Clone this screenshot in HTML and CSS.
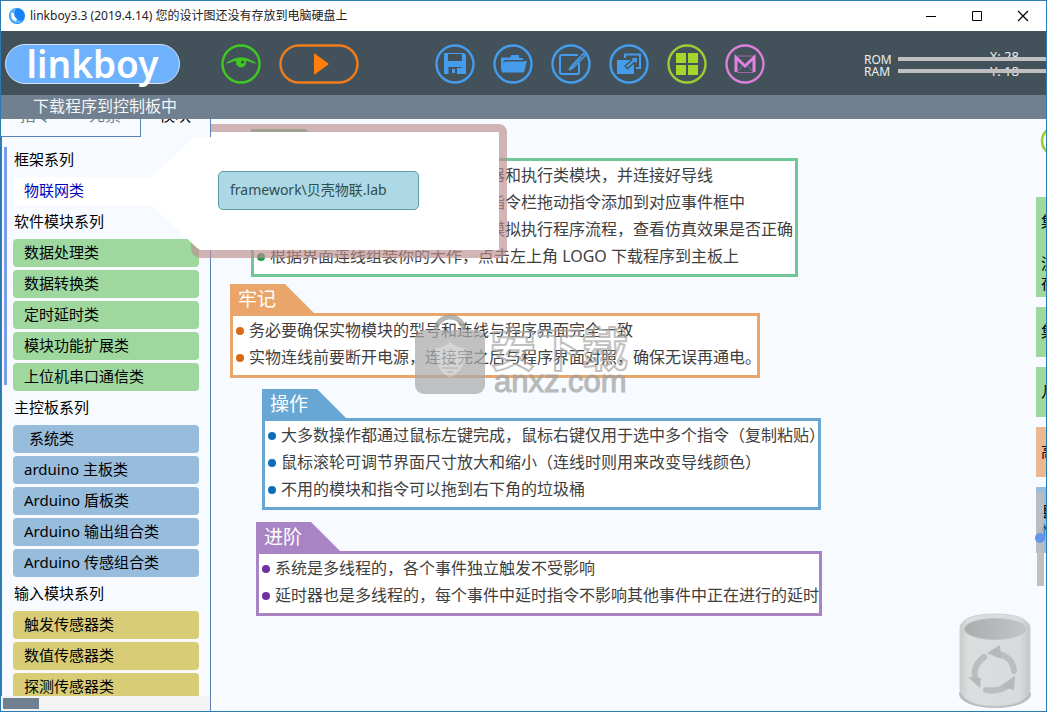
FILE: index.html
```html
<!DOCTYPE html>
<html lang="zh-CN">
<head>
<meta charset="utf-8">
<title>linkboy3.3</title>
<link rel="stylesheet" href="styles.css">
</head>
<body>
<div class="window">
  <header class="titlebar">
    <svg class="app-icon" width="18" height="18" viewBox="0 0 18 18"><circle cx="9" cy="9" r="8" fill="#1585f5"/><path d="M2 5A8 8 0 0 1 9 1Q6 4 6 8Q8 14 15 14Q10 18 5 15Q0 11 2 5Z" fill="#5cb4ff"/><path d="M3 6h3l.5 3.500L9 12l-1.500 2.500L4 12z" fill="#fff"/></svg>
    <span class="app-title">linkboy3.3 (2019.4.14) 您的设计图还没有存放到电脑硬盘上</span>
    <div class="win-buttons">
      <button class="win-btn" aria-label="最小化"><svg width="12" height="12" viewBox="0 0 12 12"><path d="M1 6.500h10" stroke="#000"/></svg></button>
      <button class="win-btn" aria-label="最大化"><svg width="12" height="12" viewBox="0 0 12 12"><path d="M1.500 1.500h9v9h-9z" fill="none" stroke="#000"/></svg></button>
      <button class="win-btn" aria-label="关闭"><svg width="12" height="12" viewBox="0 0 12 12"><path d="M1 1l10 10M11 1L1 11" stroke="#000" stroke-width="1.200"/></svg></button>
    </div>
  </header>

  <div class="toolbar">
    <button class="logo">linkboy</button>
    <div class="run-tools">
      <button class="tool" aria-label="查看"><svg width="40" height="40" viewBox="0 0 40 40"><circle cx="20" cy="20" r="18.500" fill="none" stroke="#3fc822" stroke-width="2.400"/><path d="M6 19Q20 9 34 19Q20 13 6 19Z" fill="#3fc822" stroke="#3fc822" stroke-width="1.200" stroke-linejoin="round"/><circle cx="20" cy="18.500" r="5" fill="#3fc822"/><circle cx="21.500" cy="18" r="1.600" fill="#43525a"/></svg></button>
      <button class="tool" aria-label="运行"><svg width="80" height="40" viewBox="0 0 80 40"><rect x="1.500" y="1.500" width="77" height="37" rx="18.500" fill="none" stroke="#ee7c1c" stroke-width="2.400"/><path d="M35 9v22l15-11z" fill="#ff7f0a"/></svg></button>
    </div>
    <div class="file-tools">
      <button class="tool" aria-label="保存"><svg width="40" height="40" viewBox="0 0 40 40"><circle cx="20" cy="20" r="18.500" fill="none" stroke="#459ceb" stroke-width="2.400"/><path d="M9 9h20l2 2v19H9z" fill="#459ceb"/><path d="M13 10h14v7H13zM13.500 23h13v7h-13z" fill="#43525a"/><path d="M17 25h3v4h-3zM22 24h5v6h-5z" fill="#459ceb"/></svg></button>
      <button class="tool" aria-label="打开"><svg width="40" height="40" viewBox="0 0 40 40"><circle cx="20" cy="20" r="18.500" fill="none" stroke="#459ceb" stroke-width="2.400"/><path d="M8 28V13.500h9l1.500-2.500H26v3h4v2H11.500z" fill="#459ceb"/><path d="M9 28.500V17h25l-3 11.500z" fill="#459ceb"/><path d="M10 18.500l3-1.500h18" fill="none" stroke="#43525a" stroke-width="1"/></svg></button>
      <button class="tool" aria-label="编辑"><svg width="40" height="40" viewBox="0 0 40 40"><circle cx="20" cy="20" r="18.500" fill="none" stroke="#459ceb" stroke-width="2.400"/><path d="M27 11H11q-2 0-2 2v15q0 2 2 2h15q2 0 2-2v-9" fill="none" stroke="#459ceb" stroke-width="2"/><path d="M32.500 9.500L21 21.500l-3 4.500 4.500-2.500L34 12z" fill="#43525a" stroke="#459ceb" stroke-width="1.500"/><path d="M30.500 13L20 24.500" stroke="#459ceb"/></svg></button>
      <button class="tool" aria-label="导出"><svg width="40" height="40" viewBox="0 0 40 40"><circle cx="20" cy="20" r="18.500" fill="none" stroke="#459ceb" stroke-width="2.400"/><path d="M8 16h17v14H8z" fill="#459ceb"/><path d="M16 14v-3.500h15V24h-4" fill="none" stroke="#459ceb" stroke-width="2"/><path d="M16 22l7-6-2-2.500 8-.5-1 8-2.500-2.500-7 6z" fill="#459ceb" stroke="#43525a" stroke-width="1.300"/></svg></button>
      <button class="tool" aria-label="模块"><svg width="40" height="40" viewBox="0 0 40 40"><circle cx="20" cy="20" r="18.500" fill="none" stroke="#9ccd32" stroke-width="2.400"/><path d="M9 9h10v10H9zM21 9h10v10H21zM9 21h10v10H9zM21 21h10v10H21z" fill="#a4d62c"/></svg></button>
      <button class="tool" aria-label="邮件"><svg width="40" height="40" viewBox="0 0 40 40"><circle cx="20" cy="20" r="18.500" fill="none" stroke="#dc80dc" stroke-width="2.400"/><path d="M11 28V13.500l9 8.500 9-8.500V28" fill="none" stroke="#e283e2" stroke-width="3"/><path d="M12 12h16M12 28.500h17M13 27l5-6M27 27l-5-6" stroke="#b06fb5" stroke-width=".8"/></svg></button>
    </div>
    <dl class="memory">
      <dt>ROM</dt><dd><span class="coord">X: 28</span><i class="meter"></i></dd>
      <dt>RAM</dt><dd><span class="coord">Y: 18</span><i class="meter"></i></dd>
    </dl>
  </div>

  <div class="status">下载程序到控制板中</div>

  <main class="workspace">
    <aside class="sidebar">
      <nav class="tabs">
        <button class="tab">指令</button><button class="tab tab-mid">元素</button><button class="tab tab-active">模块</button>
      </nav>
      <div class="modules">
        <div class="section-mark"></div>
        <div class="module-list">
          <h3 class="group">框架系列</h3>
          <button class="item selected">物联网类</button>
          <h3 class="group">软件模块系列</h3>
          <button class="item green">数据处理类</button>
          <button class="item green">数据转换类</button>
          <button class="item green">定时延时类</button>
          <button class="item green">模块功能扩展类</button>
          <button class="item green">上位机串口通信类</button>
          <h3 class="group">主控板系列</h3>
          <button class="item blue indent">系统类</button>
          <button class="item blue">arduino 主板类</button>
          <button class="item blue">Arduino 盾板类</button>
          <button class="item blue">Arduino 输出组合类</button>
          <button class="item blue">Arduino 传感组合类</button>
          <h3 class="group">输入模块系列</h3>
          <button class="item yellow">触发传感器类</button>
          <button class="item yellow">数值传感器类</button>
          <button class="item yellow">探测传感器类</button>
        </div>
      </div>
      <div class="hscroll"><div class="thumb"></div></div>
    </aside>

    <section class="canvas">
      <article class="note note-green">
        <h2 class="note-title"></h2>
        <ul class="note-body">
          <li class="tucked">器和执行类模块，并连接好导线</li>
          <li class="tucked">指令栏拖动指令添加到对应事件框中</li>
          <li class="tucked">模拟执行程序流程，查看仿真效果是否正确</li>
          <li>根据界面连线组装你的大作，点击左上角 LOGO 下载程序到主板上</li>
        </ul>
      </article>
      <article class="note note-orange">
        <h2 class="note-title">牢记</h2>
        <ul class="note-body">
          <li>务必要确保实物模块的型号和连线与程序界面完全一致</li>
          <li>实物连线前要断开电源，连接完之后与程序界面对照，确保无误再通电。</li>
        </ul>
      </article>
      <article class="note note-blue">
        <h2 class="note-title">操作</h2>
        <ul class="note-body">
          <li>大多数操作都通过鼠标左键完成，鼠标右键仅用于选中多个指令（复制粘贴）</li>
          <li>鼠标滚轮可调节界面尺寸放大和缩小（连线时则用来改变导线颜色）</li>
          <li>不用的模块和指令可以拖到右下角的垃圾桶</li>
        </ul>
      </article>
      <article class="note note-purple">
        <h2 class="note-title">进阶</h2>
        <ul class="note-body">
          <li>系统是多线程的，各个事件独立触发不受影响</li>
          <li>延时器也是多线程的，每个事件中延时指令不影响其他事件中正在进行的延时</li>
        </ul>
      </article>

      <div class="watermark">
        <svg width="72" height="80" viewBox="0 0 72 80"><path d="M22 24v-7a14 14 0 0 1 28 0v7" fill="none" stroke="#999" stroke-width="5"/><rect x="1" y="16" width="70" height="64" rx="9" fill="#aaa"/><path d="M36 28Q44 35 52 34Q53 55 36 64Q20 55 21 34Q29 35 36 28Z" fill="#c6c6c6"/><path d="M30 49h12M28 54h16M33 58h6" stroke="#aaa" stroke-width="2"/></svg>
        <div class="mark-text"><span class="mark-cn">安下载</span><span class="mark-url">anxz.com</span></div>
      </div>

      <div class="palette">
        <svg class="ring" width="10" height="32" viewBox="0 0 10 32"><circle cx="20" cy="16" r="14" fill="none" stroke="#9ccd32" stroke-width="2.500"/></svg>
        <div class="block tall"><span>集</span><span class="low">流</span><span>存</span></div>
        <div class="block"><span>集</span></div>
        <div class="block"><span>几</span></div>
        <div class="block peach"><span>高</span></div>
        <div class="block sky"><span>县</span><span>情</span></div>
        <svg class="slider" width="11" height="96" viewBox="0 0 11 96"><path d="M1 0h8v61H1z" fill="#bdbdbd" opacity=".85"/><path d="M2 61h7v33H2z" fill="#c0c0c0"/><circle cx="5" cy="46" r="5" fill="#6495ed"/></svg>
      </div>

      <svg class="bin" width="80" height="98" viewBox="0 0 80 98">
        <defs><linearGradient id="bin-body"><stop offset="0" stop-color="#c9cbcc"/><stop offset=".12" stop-color="#dcdddf"/><stop offset=".85" stop-color="#d9dadb"/><stop offset="1" stop-color="#c4c6c7"/></linearGradient><linearGradient id="bin-hole"><stop offset="0" stop-color="#aaadae"/><stop offset="1" stop-color="#c2c5c5"/></linearGradient></defs>
        <ellipse cx="40" cy="82" rx="36" ry="14" fill="#b9bbbd"/>
        <path d="M5 14Q10 2 40 2T75 14V78Q70 94 40 94T5 78Z" fill="url(#bin-body)" stroke="#cfd1d2"/>
        <ellipse cx="40" cy="17" rx="30.500" ry="10.500" fill="url(#bin-hole)" stroke="#bfc1c2"/>
        <g fill="none" stroke="#bbbdbf" stroke-width="6" stroke-linecap="round"><path d="M43 42Q58 45 59 59"/><path d="M31 78Q44 80 52 74"/><path d="M29 45Q18 53 20 65"/></g>
        <g fill="#b6b8ba"><path d="M32 41l13-8 1 14z"/><path d="M60 64l-1 14-14-4z"/><path d="M13 65l13 1-1 10z"/></g>
      </svg>
    </section>

    <div class="popup">
      <svg class="popup-shape" width="520" height="150" viewBox="1 119 520 150">
        <path fill="#bc8f8f" fill-opacity=".66" d="M211 124H499a8 8 0 0 1 8 8V250a8 8 0 0 1-8 8H200a9 9 0 0 1-9-9V241L200 250H499V132H211Z"/>
        <path fill="#fff" d="M14 177H152L193 139Q195 137 200 137H211V132H496a3 3 0 0 1 3 3V250H202Q199 250 196 247L152 205H14Z"/>
      </svg>
      <button class="lab">framework\贝壳物联.lab</button>
    </div>
  </main>
</div>
</body>
</html>
```
FILE: styles.css
```css
* { box-sizing: border-box; }

body {
  margin: 0;
  font-family: "Noto Sans", "Noto Sans CJK SC", sans-serif;
  color: #000;
}

button {
  margin: 0;
  padding: 0;
  border: 0;
  background: none;
  font: inherit;
  color: inherit;
  text-align: left;
}

svg { display: block; }
h2, h3, ul, dl, dd { margin: 0; padding: 0; font-weight: 400; }

.window {
  display: flex;
  flex-direction: column;
  height: 100vh;
  border: 1px solid #2b7bb5;
  overflow: hidden;
  background: #f7fbff;
}

.titlebar {
  display: flex;
  align-items: center;
  height: 30px;
  flex: none;
  padding-left: 7px;
  background: #fff;
}
.app-title { margin-left: 4px; font-size: 12px; line-height: 18px; color: #222; }
.win-buttons { display: flex; margin-left: auto; }
.win-btn { display: grid; place-items: center; width: 46px; height: 30px; }

.toolbar {
  display: flex;
  align-items: center;
  height: 64px;
  flex: none;
  padding: 1px 0 0 4px;
  background: #43525a;
}
.logo {
  width: 175px;
  height: 40px;
  border: 1px solid #cfe4fb;
  border-radius: 20px;
  background: #6eb2fd;
  color: #fff;
  font-size: 37px;
  font-weight: 600;
  line-height: 32px;
  text-align: center;
}
.run-tools { display: flex; gap: 18px; margin-left: 41px; }
.file-tools { display: flex; gap: 18px; margin-left: 76px; }

.memory {
  display: grid;
  grid-template-columns: 34px 1fr;
  grid-auto-rows: 12px;
  flex: 1;
  margin-left: 99px;
  padding-top: 4px;
  font-size: 12px;
  line-height: 12px;
  color: #eee;
}
.memory dd { position: relative; }
.meter { position: absolute; left: 0; right: 0; top: 3px; height: 4px; background: #c0c0c0; }
.coord { position: absolute; right: 27px; top: -4px; font-size: 13px; }
.memory dd:last-child .coord { top: -1px; }

.status {
  flex: none;
  height: 24px;
  padding-left: 32px;
  background: #708090;
  color: #f4f6f8;
  font-size: 16px;
  line-height: 23px;
}

.workspace { position: relative; display: flex; flex: 1; min-height: 0; }

.sidebar {
  display: flex;
  flex-direction: column;
  width: 210px;
  flex: none;
  border-right: 1px solid #5b82b8;
}
.tabs { display: flex; align-items: flex-end; height: 18px; flex: none; overflow: hidden; }
.tab {
  width: 70px;
  height: 34px;
  padding-bottom: 10px;
  border-bottom: 1px solid #5b82b8;
  color: #708090;
  font-size: 16px;
  line-height: 20px;
  text-align: center;
}
.tab-mid { width: 71px; border-right: 1px solid #5b82b8; }
.tab-active { border-color: transparent; color: #000; }

.modules { display: flex; flex: 1; min-height: 0; overflow: hidden; border-left: 1px solid #3477cc; }
.section-mark { width: 3px; height: 238px; margin: 10px 6px 0 2px; background: #7b9ce6; }
.module-list { display: flex; flex-direction: column; gap: 3px; flex: 1; padding: 9px 11px 0 0; }
.group, .item { flex: none; height: 28px; padding-bottom: 2px; font-size: 15px; line-height: 26px; }
.group { padding-left: 1px; }
.item { padding-left: 11px; border-radius: 4px; }
.selected { position: relative; z-index: 2; color: #0000b8; }
.green { background: #9fd89f; }
.blue { background: #98bcdc; }
.yellow { background: #d8cd76; }
.indent { padding-left: 16px; }

.hscroll { flex: none; height: 15px; padding: 2px; background: #f3f3f3; }
.thumb { width: 36px; height: 11px; background: #708090; }

.canvas { position: relative; flex: 1; min-width: 0; overflow: hidden; padding-top: 10px; }

.note { white-space: nowrap; }
.note-title {
  width: 84px;
  height: 29px;
  padding-left: 8px;
  background: var(--edge);
  color: #fff;
  font-size: 19px;
  line-height: 30px;
  clip-path: polygon(0 0, 55px 0, 84px 100%, 0 100%);
}
.note-body {
  list-style: none;
  padding: 1px 0 4px 3px;
  border: 3px solid var(--edge);
  background: #fff;
  color: #404040;
  font-size: 16px;
  line-height: 27px;
}
.note-body li { display: flex; align-items: center; gap: 5px; }
.note-body li::before {
  content: "";
  width: 8px;
  height: 8px;
  flex: none;
  border-radius: 4px;
  background: var(--dot);
}
.note-body .tucked { gap: 224px; }

.note-green { --edge: #70c796; --dot: #1f9a50; width: 547px; margin: 0 0 7px 40px; }
.note-orange { --edge: #eaa66a; --dot: #d86a14; width: 530px; margin: 0 0 11px 19px; }
.note-blue { --edge: #68a7d4; --dot: #0f6db8; width: 559px; margin: 0 0 12px 51px; }
.note-purple { --edge: #a884c4; --dot: #7030a0; width: 566px; margin: 0 0 0 45px; }

.watermark { position: absolute; left: 203px; top: 195px; display: flex; gap: 4px; opacity: .72; }
.mark-text { display: flex; flex-direction: column; font-family: "Liberation Sans", "Noto Sans CJK SC", sans-serif; }
.mark-cn {
  height: 48px;
  margin-top: 12px;
  font-size: 46px;
  font-weight: 700;
  line-height: 48px;
  color: transparent;
  -webkit-text-stroke: 2px #aaa;
}
.mark-url {
  margin-top: -5px;
  padding-left: 4px;
  color: #a0a0a0;
  font-size: 31px;
  line-height: 26px;
  -webkit-text-stroke: 1px #a0a0a0;
}

.palette {
  position: absolute;
  top: 6px;
  right: 0;
  width: 10px;
  display: flex;
  flex-direction: column;
  gap: 10px;
}
.ring { margin-bottom: 30px; }
.block {
  height: 50px;
  padding: 14px 0 0 5px;
  overflow: hidden;
  background: #9fd89f;
  font-size: 15px;
  line-height: 20px;
  white-space: nowrap;
}
.block span { display: block; }
.tall { height: 100px; }
.low { margin-top: 22px; }
.peach { background: #eab893; }
.sky { height: 66px; background: #98bcdc; }
.slider { position: absolute; left: -1px; top: 367px; }

.bin { position: absolute; right: 11px; bottom: 1px; }

.popup { position: absolute; left: 0; top: 0; padding: 52px 0 0 217px; }
.popup-shape { position: absolute; left: 0; top: 0; }
.lab {
  position: relative;
  width: 201px;
  height: 39px;
  padding: 0 0 2px 11px;
  border: 1px solid #5f9ea0;
  border-radius: 5px;
  background: #add8e6;
  color: #2f4f4f;
  font-size: 14px;
  line-height: 35px;
}
```
